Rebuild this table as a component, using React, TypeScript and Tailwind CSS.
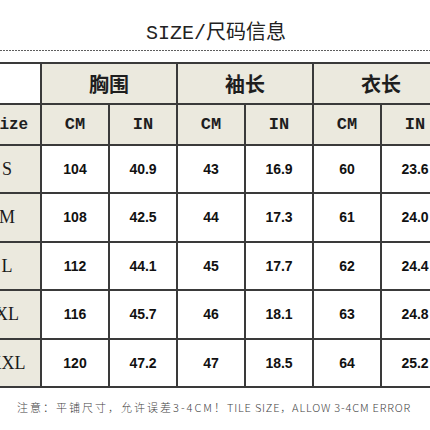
import React from "react"

type Row = { size: string; values: string[] }

const rows: Row[] = [
  { size: "S", values: ["104", "40.9", "43", "16.9", "60", "23.6"] },
  { size: "M", values: ["108", "42.5", "44", "17.3", "61", "24.0"] },
  { size: "L", values: ["112", "44.1", "45", "17.7", "62", "24.4"] },
  { size: "XL", values: ["116", "45.7", "46", "18.1", "63", "24.8"] },
  { size: "XXL", values: ["120", "47.2", "47", "18.5", "64", "25.2"] },
]

const groups = ["胸围", "袖长", "衣长"]

const cjk = "font-['Noto_Sans_CJK_SC',sans-serif]"
const mono = "font-['Liberation_Mono','Noto_Sans_CJK_SC',monospace]"
const beige = "bg-[#ebe9de]"

export default function App() {
  return (
    <div className="w-[430px] h-[430px] overflow-hidden bg-white">
      <div className="pt-[17px] h-[50px] flex justify-center">
        <h1 className={`${mono} text-[20px] leading-[28px] text-[#222] pl-[2px]`}>
          SIZE/<span className={cjk}>尺码信息</span>
        </h1>
      </div>
      <div className="h-px bg-[repeating-linear-gradient(90deg,#5e5e5e_0_2px,transparent_2px_3px)]" />

      <div className="mt-[11px] ml-[-28px] w-fit bg-[#3a3a3a] p-[2px] grid grid-cols-[repeat(7,66px)] grid-rows-[39px_39px_46px_47px_46px_47px_46px] gap-[2px]">
        <div className="bg-white" />
        {groups.map((g) => (
          <div
            key={g}
            className={`${beige} col-span-2 flex items-center justify-center ${cjk} font-semibold text-[20px] text-[#1e1e1e]`}
          >
            {g}
          </div>
        ))}

        <div className={`${beige} flex items-center justify-center pl-[4px] ${mono} font-bold text-[16px] text-[#1e1e1e]`}>
          Size
        </div>
        {groups.flatMap((g) =>
          ["CM", "IN"].map((u) => (
            <div
              key={g + u}
              className={`${beige} flex items-center justify-center ${mono} font-bold text-[17px] text-[#1e1e1e]`}
            >
              {u}
            </div>
          ))
        )}

        {rows.map((r) => (
          <React.Fragment key={r.size}>
            <div className={`${beige} flex items-center justify-center font-['Liberation_Serif',serif] text-[18px] text-[#1a1a1a]`}>
              {r.size}
            </div>
            {r.values.map((v, i) => (
              <div
                key={i}
                className="bg-white flex items-center justify-center font-['Liberation_Sans',sans-serif] font-bold text-[14px] text-[#111]"
              >
                {v}
              </div>
            ))}
          </React.Fragment>
        ))}
      </div>

      <p className="mt-[12px] pl-[17px] whitespace-nowrap text-[11px] leading-[14px] text-[#444] font-['Noto_Sans_CJK_SC',sans-serif] font-light">
        <span className="tracking-[2px]">注意：平铺尺寸，允许误差3-4CM！</span>
        <span className="tracking-[0.8px]">TILE SIZE，ALLOW 3-4CM ERROR</span>
      </p>
    </div>
  )
}
